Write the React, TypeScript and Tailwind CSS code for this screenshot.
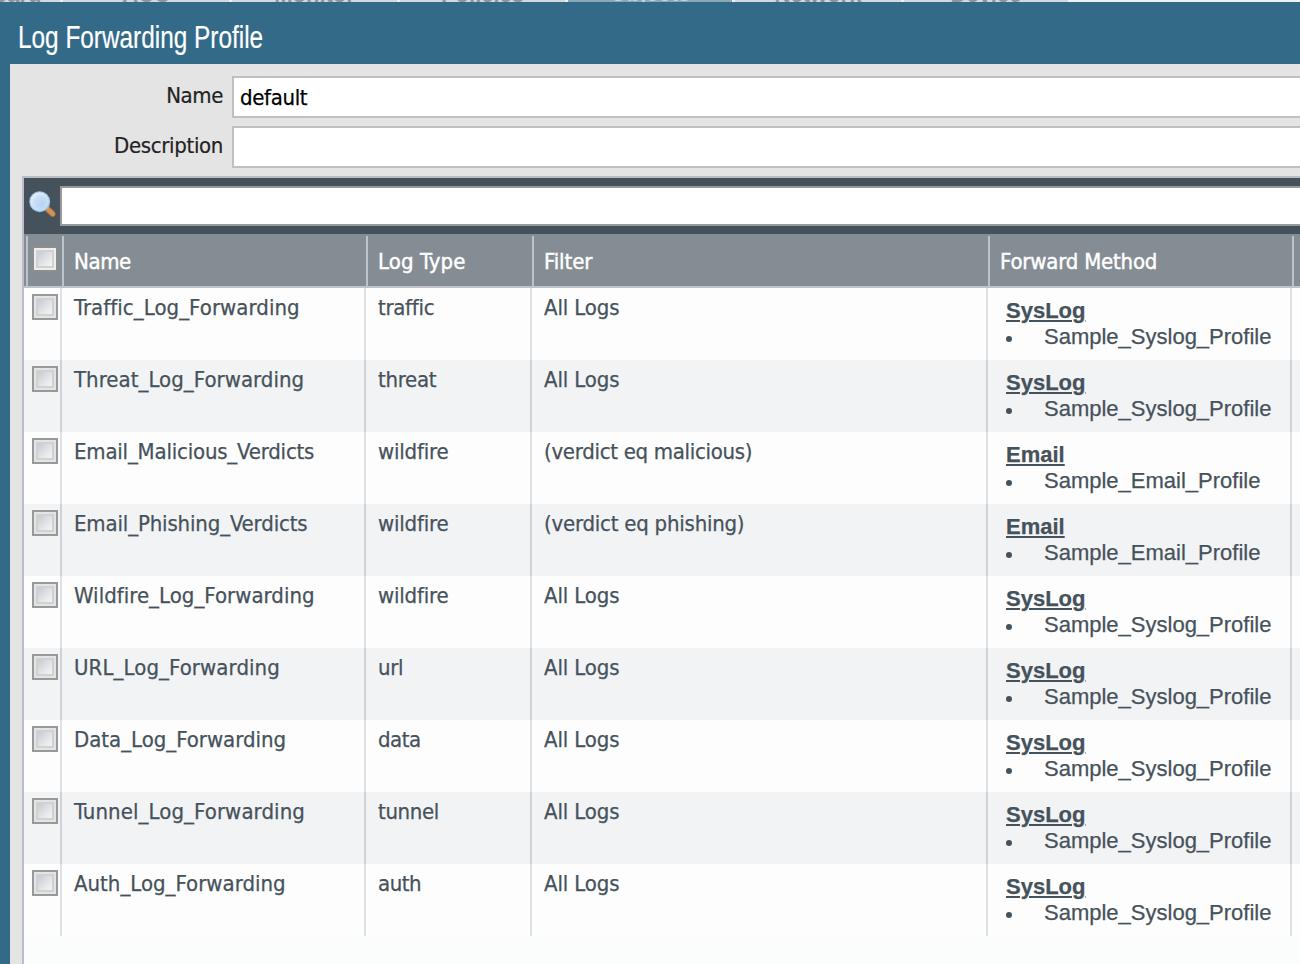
import type { ReactNode } from "react";

type Row = {
  name: string;
  nameTracking: string;
  type: string;
  typeTracking: string;
  filter: string;
  filterTracking: string;
  method: "SysLog" | "Email";
  profile: string;
};

const syslog = { method: "SysLog", profile: "Sample_Syslog_Profile" } as const;
const email = { method: "Email", profile: "Sample_Email_Profile" } as const;
const allLogs = { filter: "All Logs", filterTracking: "tracking-[-0.12px]" };
const wildfire = { type: "wildfire", typeTracking: "tracking-[-0.2px]" };

const rows: Row[] = [
  { name: "Traffic_Log_Forwarding", nameTracking: "tracking-[0.05px]", type: "traffic", typeTracking: "tracking-[-0.3px]", ...allLogs, ...syslog },
  { name: "Threat_Log_Forwarding", nameTracking: "tracking-[0.03px]", type: "threat", typeTracking: "tracking-[-0.3px]", ...allLogs, ...syslog },
  { name: "Email_Malicious_Verdicts", nameTracking: "tracking-[-0.2px]", ...wildfire, filter: "(verdict eq malicious)", filterTracking: "tracking-[-0.3px]", ...email },
  { name: "Email_Phishing_Verdicts", nameTracking: "tracking-[-0.15px]", ...wildfire, filter: "(verdict eq phishing)", filterTracking: "tracking-[-0.23px]", ...email },
  { name: "Wildfire_Log_Forwarding", nameTracking: "tracking-[0.02px]", ...wildfire, ...allLogs, ...syslog },
  { name: "URL_Log_Forwarding", nameTracking: "tracking-[0.08px]", type: "url", typeTracking: "tracking-[-0.3px]", ...allLogs, ...syslog },
  { name: "Data_Log_Forwarding", nameTracking: "tracking-[-0.02px]", type: "data", typeTracking: "tracking-[-0.5px]", ...allLogs, ...syslog },
  { name: "Tunnel_Log_Forwarding", nameTracking: "tracking-[0.08px]", type: "tunnel", typeTracking: "tracking-[-0.35px]", ...allLogs, ...syslog },
  { name: "Auth_Log_Forwarding", nameTracking: "tracking-[0px]", type: "auth", typeTracking: "tracking-[-0.45px]", ...allLogs, ...syslog },
];

const tabs = [
  { label: "Dashboard", width: "w-[60px]", text: "-ml-[92px]", active: false },
  { label: "ACC", width: "w-[166px]", text: "", active: false },
  { label: "Monitor", width: "w-[165px]", text: "", active: false },
  { label: "Policies", width: "w-[165px]", text: "", active: false },
  { label: "Objects", width: "w-[164px]", text: "", active: true },
  { label: "Network", width: "w-[166px]", text: "", active: false },
  { label: "Device", width: "w-[164px]", text: "", active: false },
];

function TabStrip() {
  return (
    <div className="flex h-[2px] shrink-0 gap-[3px] overflow-hidden bg-[#eef0f1] font-['Liberation_Sans',sans-serif] text-[22px] font-bold leading-[26px]">
      {tabs.map((tab) => (
        <div
          key={tab.label}
          className={`flex shrink-0 items-end justify-center overflow-hidden ${tab.width} ${tab.active ? "bg-[#8ba8b8] text-[#c0d4e0]" : "bg-[#d3d9dd] text-[#8f9498]"}`}
        >
          <span className={`${tab.active ? "-mb-[5px]" : "-mb-[6px]"} ${tab.text}`}>{tab.label}</span>
        </div>
      ))}
    </div>
  );
}

function Checkbox({ header = false }: { header?: boolean }) {
  return (
    <span
      className={`block size-[26px] shrink-0 border-2 p-[2px] ${header ? "border-[#8c8d8c] bg-[#eeeeec]" : "border-[#989a99] bg-[#e3e4e3]"}`}
    >
      <span className="block size-[18px] border-2 border-[#cfd1d3] bg-linear-135 from-[#c6cad2] via-[#e0e2e5] to-[#f5f5f5]" />
    </span>
  );
}

function SearchIcon() {
  return (
    <svg viewBox="0 0 28 28" className="size-[28px]">
      <defs>
        <radialGradient id="lens" cx="0.6" cy="0.62" r="0.62">
          <stop offset="0" stopColor="#b4d3f3" />
          <stop offset="0.65" stopColor="#c9e0f6" />
          <stop offset="1" stopColor="#e6f1fa" />
        </radialGradient>
        <linearGradient id="handle" x1="0" y1="1" x2="1" y2="0">
          <stop offset="0" stopColor="#8a4a14" />
          <stop offset="0.5" stopColor="#d89a5c" />
          <stop offset="1" stopColor="#a45f22" />
        </linearGradient>
      </defs>
      <path d="M16.2 20l3.8-4.4 6.8 6.4c1 1.1.9 2.8-.2 3.9-1.1 1.1-2.7 1.2-3.8.3z" fill="url(#handle)" stroke="#8a5a34" strokeWidth="0.5" />
      <circle cx="11.7" cy="11.7" r="9.9" fill="url(#lens)" stroke="#9cc2e8" strokeWidth="1.1" />
    </svg>
  );
}

function HeaderCell({ children, tracking }: { children: ReactNode; tracking: string }) {
  return (
    <div className={`border-r-2 border-[#c0c2ca] pl-[10px] pt-[11px] [-webkit-text-stroke:0.4px_#fff] ${tracking}`}>{children}</div>
  );
}

function TableRow({ row, striped }: { row: Row; striped: boolean }) {
  const cell = `border-r-2 ${striped ? "border-[#cdd3d8]" : "border-[#dde1e6]"}`;
  return (
    <div
      className={`grid h-[72px] grid-cols-[38px_304px_166px_456px_304px_1fr] [-webkit-text-stroke:0.25px_#46525b] ${striped ? "bg-[#f2f3f5]" : "bg-[#fdfdfd]"}`}
    >
      <div className={`pl-2 pt-[6px] ${cell}`}>
        <Checkbox />
      </div>
      <div className={`pl-3 pt-[5px] ${cell} ${row.nameTracking}`}>{row.name}</div>
      <div className={`pl-3 pt-[5px] ${cell} ${row.typeTracking}`}>{row.type}</div>
      <div className={`pl-3 pt-[5px] ${cell} ${row.filterTracking}`}>{row.filter}</div>
      <div className={`pl-[18px] pt-[10px] font-['Liberation_Sans',sans-serif] leading-[26px] ${cell}`}>
        <div className="font-bold underline decoration-2 underline-offset-[2px]">{row.method}</div>
        <div className="flex items-center">
          <span className="mr-8 mt-[3px] size-[6px] rounded-full bg-[#46525b]" />
          <span>{row.profile}</span>
        </div>
      </div>
      <div />
    </div>
  );
}

function Field({ label, value, tracking }: { label: string; value?: string; tracking: string }) {
  return (
    <div className="flex h-[42px]">
      <div className={`w-[222px] shrink-0 pr-[9px] pt-[5px] text-right text-[#222] [-webkit-text-stroke:0.2px_#222] ${tracking}`}>{label}</div>
      <div className="flex-1 border-2 border-r-0 border-[#c0c0c0] bg-white pl-[6px] pt-[5px] tracking-[-0.35px] text-black [-webkit-text-stroke:0.25px_#000]">
        {value}
      </div>
    </div>
  );
}

export default function App() {
  return (
    <div className="flex h-[964px] w-[1300px] flex-col overflow-hidden bg-[#336a88] font-['DejaVu_Sans_Condensed','DejaVu_Sans',sans-serif] text-[22px] leading-[30px] text-[#46525b]">
      <TabStrip />
      <header className="flex h-[62px] shrink-0 items-center pl-[18px] font-['Liberation_Sans',sans-serif] text-[31px] text-white">
        <h1 className="mt-[10px] origin-left scale-x-[0.786] whitespace-nowrap [-webkit-text-stroke:0.2px_#fff]">Log Forwarding Profile</h1>
      </header>
      <main className="ml-[10px] flex flex-1 flex-col bg-[#e4e4e4] pt-3">
        <div className="flex flex-col gap-2">
          <Field label="Name" value="default" tracking="tracking-[-0.4px]" />
          <Field label="Description" tracking="tracking-[-0.35px]" />
        </div>
        <section className="ml-3 mt-2 flex flex-1 flex-col border-l-2 border-t-2 border-[#b9bdc6] bg-[#fbfcfc]">
          <div className="flex h-[56px] shrink-0 bg-[#46525b] py-2">
            <div className="w-9 shrink-0 pl-[4px] pt-[4px]">
              <SearchIcon />
            </div>
            <div className="flex-1 border-2 border-r-0 border-[#999] bg-white" />
          </div>
          <div className="grid h-[54px] shrink-0 grid-cols-[4px_36px_304px_166px_456px_304px_1fr] border-b-2 border-[#c0c2ca] bg-[#858d94] pt-[2px] text-white">
            <div className="border-r-2 border-[#c0c2ca]" />
            <div className="border-r-2 border-[#c0c2ca] pl-1 pt-[10px]">
              <Checkbox header />
            </div>
            <HeaderCell tracking="tracking-[-0.4px]">Name</HeaderCell>
            <HeaderCell tracking="tracking-[0.1px]">Log Type</HeaderCell>
            <HeaderCell tracking="tracking-[-0.1px]">Filter</HeaderCell>
            <HeaderCell tracking="tracking-[-0.2px]">Forward Method</HeaderCell>
            <div />
          </div>
          {rows.map((row, i) => (
            <TableRow key={row.name} row={row} striped={i % 2 === 1} />
          ))}
        </section>
      </main>
    </div>
  );
}
